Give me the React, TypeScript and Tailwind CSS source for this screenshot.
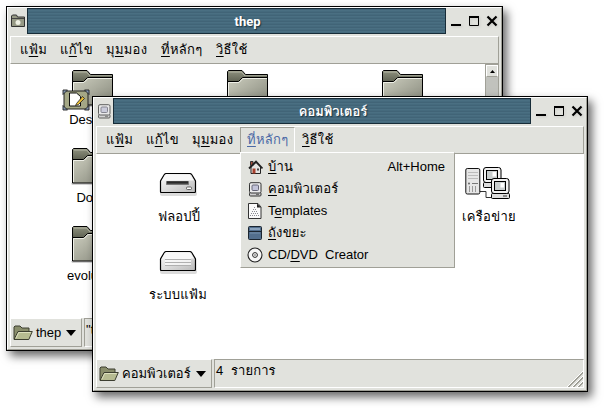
import React from 'react';

type Box = { children?: React.ReactNode; className?: string };

const sans = "font-['Liberation_Sans','Loma','Waree','Noto_Sans_Thai_Looped','Noto_Looped_Thai','Garuda','Umpush',sans-serif]";

function Key({ children }: Box) {
  return <span className="underline decoration-1 underline-offset-2">{children}</span>;
}

function Th({ children }: Box) {
  return <span className="tracking-[0.2px]">{children}</span>;
}

function Folder() {
  return (
    <svg width="44" height="42" viewBox="0 0 44 42" className="block">
      <defs>
        <linearGradient id="ff" x1="0" y1="0" x2="1" y2="1">
          <stop offset="0" stopColor="#cdcebf" />
          <stop offset="1" stopColor="#85877a" />
        </linearGradient>
        <linearGradient id="fb" x1="0" y1="0" x2="0" y2="1">
          <stop offset="0" stopColor="#8f927f" />
          <stop offset=".35" stopColor="#5c5f50" />
        </linearGradient>
      </defs>
      <path d="M0 36h42v2H1z" fill="#000" opacity=".18" />
      <path d="M1.500 35.500V2.500l1-1H16l3.500 4h22v30z" fill="url(#fb)" stroke="#000" />
      <path d="M3 3h12.500l3.500 4" fill="none" stroke="#b4b6a5" />
      <path d="M19 6.500h22" stroke="#9b9d8f" />
      <path d="M1.500 12.500h11l4-4h25v27.500h-40z" fill="url(#ff)" stroke="#000" />
      <path d="M2.500 35V13.500h10.500l4-4H41" fill="none" stroke="#eeefe6" />
    </svg>
  );
}

function OpenFolder() {
  return (
    <svg width="20" height="16" viewBox="0 0 20 16" className="block shrink-0">
      <path d="M1 14V2l1-1h5l2 2h7v3" fill="#898d6b" stroke="#3c3e30" />
      <path d="M1 14.500L5 6.500h14.300l-3.500 8z" fill="#b6bb91" stroke="#3c3e30" />
      <path d="M3 13L5.700 7.500h12" fill="none" stroke="#dde0bf" />
    </svg>
  );
}

function ComputerIcon({ dim }: { dim?: boolean }) {
  return (
    <svg width="14" height="15" viewBox="0 0 14 15" className={dim ? 'block shrink-0 opacity-75' : 'block shrink-0'}>
      <rect x="1.500" y="10.500" width="11.500" height="3.500" rx="1" fill="#cfcfd0" stroke="#333" />
      <rect x="1.500" y=".7" width="11.500" height="10.300" rx="1.500" fill="#ececee" stroke="#333" />
      <rect x="4" y="3" width="6.500" height="5.500" rx="1" fill="#c3c4da" stroke="#666677" />
      <path d="M8 12.300h3" stroke="#555" />
    </svg>
  );
}

function HomeIcon() {
  return (
    <svg width="15" height="15" viewBox="0 0 15 15" className="block">
      <path d="M3 7v6.500h9.500V7L8 2.500z" fill="#e4e4e2" stroke="#222" />
      <path d="M2.500 1.500h2.500v4H2.500z" fill="#a8503e" stroke="#333" />
      <path d="M1 8.500L8 1.500l6.500 7" fill="none" stroke="#222" strokeWidth="1.800" />
      <path d="M4.500 8.500h3v5h-3z" fill="#a8402c" />
      <path d="M9 8.500h2v2H9z" fill="#444" />
    </svg>
  );
}

function TemplateIcon() {
  return (
    <svg width="14" height="16" viewBox="0 0 14 16" className="block">
      <path d="M.5.500h9.500l3 3.500v11.500H.5z" fill="#fafafa" stroke="#333" />
      <path d="M9 .5V4.500h4z" fill="#222" />
      <path d="M6 4.500h1M5 6.500h4M4 8.500h6M3 10.500h8M2 12.500h9" stroke="#8b8b93" strokeDasharray="1 1" />
    </svg>
  );
}

function TrashIcon() {
  return (
    <svg width="14" height="14" viewBox="0 0 14 14" className="block">
      <rect x=".5" y=".5" width="13" height="13" rx="1" fill="#526e8d" stroke="#1b2530" />
      <path d="M2 2h10v2H2z" fill="#8aa2bc" />
      <path d="M1 5.500h12" stroke="#1b2530" />
      <path d="M2 7h10" stroke="#7791ad" />
    </svg>
  );
}

function DiscIcon() {
  return (
    <svg width="16" height="16" viewBox="0 0 16 16" className="block">
      <circle cx="8" cy="8" r="7" fill="#f6f6f6" stroke="#222" strokeWidth="1.100" />
      <circle cx="8" cy="8" r="2.400" fill="#fff" stroke="#222" />
      <circle cx="8" cy="8" r=".7" fill="#222" />
    </svg>
  );
}

function Drive({ floppy }: { floppy?: boolean }) {
  return (
    <svg width="38" height="25" viewBox="0 0 38 25" className="block">
      <defs>
        <linearGradient id="drive" x2="1" y2="1">
          <stop stopColor="#fff" />
          <stop offset="1" stopColor="#b9b9b9" />
        </linearGradient>
      </defs>
      <rect x="1" y="18" width="37" height="5" rx="2" fill="#000" opacity=".14" />
      <path d="M1.500 18.500V8L5 2q1-1.500 2.500-1.500h23q1.500 0 2.500 1.500l3.500 6v10.500q0 1-1 1h-33q-1 0-1-1z" fill="url(#drive)" stroke="#000" strokeWidth="1.200" />
      <path d="M3 7.500L6 2.500 7.500 1.500h23l1.500 1 3 5" fill="#f8f8f8" />
      {floppy ? (
        <>
          <path d="M7.500 8.500h22v3h-22z" fill="#444" stroke="#777" />
          <path d="M8 9h21" stroke="#111" />
          <rect x="27.500" y="14" width="5" height="2.500" rx="1" fill="#fff" stroke="#444" strokeWidth=".8" />
        </>
      ) : (
        <>
          <path d="M6 7h26v8H6z" fill="#fff" opacity=".7" />
          <path d="M6 8.500h26M6 11.500h26M6 14.500h26" stroke="#b0b0b0" />
        </>
      )}
    </svg>
  );
}

function Network() {
  const pc = (x: number, y: number) => (
    <g transform={`translate(${x} ${y})`}>
      <path d="M1.500 15.500h16q1 0 1 1v3q0 1-1 1h-16q-1 0-1-1v-3q0-1 1-1z" fill="#ddd" stroke="#000" />
      <rect x=".5" y=".5" width="17.500" height="15" rx="2.500" fill="#f1f1f1" stroke="#000" />
      <rect x="3.500" y="3.500" width="11" height="9" fill="#c9cece" stroke="#000" />
      <path d="M9.500 5h3.500v4.500H9.500z" fill="#fff" />
      <path d="M12 18h4" stroke="#333" />
    </g>
  );
  return (
    <svg width="47" height="34" viewBox="0 0 47 34" className="block">
      <path d="M15 24.500h6v6h6" fill="none" stroke="#333" />
      <rect x=".8" y="1.500" width="14" height="25.500" rx="1.500" fill="#e6e6e6" stroke="#111" />
      <path d="M3 5.500h10M3 8.500h10M3 11.500h10" stroke="#bbb" />
      <circle cx="4" cy="16.500" r="1" fill="#666" />
      <path d="M7 16.500h6" stroke="#777" />
      <path d="M4.500 19v6M7.500 19v6M10.500 19v6" stroke="#999" />
      {pc(18, 0)}
      {pc(26, 11)}
    </svg>
  );
}

function DesktopEmblem() {
  return (
    <svg width="28" height="22" viewBox="0 0 28 22" className="block">
      <rect x="2" y="2" width="24" height="18" rx="1" fill="#a5a886" stroke="#222" />
      <path d="M1 1h4.500L1 5.500zM27 1h-4.500L27 5.500zM1 21v-4.500L5.500 21zM27 21v-4.500L22.500 21z" fill="#8195b0" stroke="#222" strokeWidth=".9" />
      <path d="M7.500 4h7l4 3.500v9.500h-11z" fill="#fff" stroke="#111" />
      <path d="M14.500 14.500l6-7 2 2-6 6-3 1z" fill="#e9bd35" stroke="#222" strokeWidth=".8" />
    </svg>
  );
}

function Controls() {
  return (
    <svg width="48" height="14" viewBox="0 0 48 14" className="block drop-shadow-[1px_1px_1px_#9995]">
      <path d="M0 10h10v2H0z" />
      <path d="M18.500 3.500h9v8h-9z" fill="none" stroke="#000" />
      <path d="M18 3h10" stroke="#000" strokeWidth="2" />
      <path d="M36.500 2.500l9 9M45.500 2.500l-9 9" stroke="#000" strokeWidth="2.200" />
    </svg>
  );
}

function Menus({ open }: { open?: boolean }) {
  return (
    <nav className="flex h-7 shrink-0 border border-t-white border-l-white border-r-[#a0a097] border-b-[#a0a097] pl-[9px] text-[13px] leading-[26px] tracking-[0.3px] whitespace-nowrap">
      <span className="w-10 shrink-0">แ<Key>ฟ้</Key>ม</span>
      <span className="w-[46px] shrink-0">แ<Key>ก้</Key>ไข</span>
      <span className="w-[48px] shrink-0">มุ<Key>ม</Key>มอง</span>
      <span className={open ? 'h-[26px] w-[55px] shrink-0 border border-[#a0a097] border-b-white border-r-white pl-[6px] leading-[24px] text-[#4b69a5]' : 'w-[55px] shrink-0 pl-[7px]'}>
        <Key>ที่</Key>หลักๆ
      </span>
      <span className="pl-[7px]"><Key>วิ</Key>ธีใช้</span>
    </nav>
  );
}

function Status({ label, text, grip, width }: { label: string; text: string; grip?: boolean; width: string }) {
  return (
    <footer className="flex h-[29px] shrink-0 gap-[2px] text-[13px]">
      <div className={`${width} flex shrink-0 items-center gap-[3px] border border-t-white border-l-white border-r-[#a0a097] border-b-[#a0a097] pl-[2px] whitespace-nowrap`}>
        <OpenFolder />
        <span className="grow">{label}</span>
        <svg width="10" height="6" className="mr-[5px] block"><path d="M0 0h10L5 6z" /></svg>
      </div>
      <div className="flex grow items-end justify-between overflow-hidden border border-t-[#a0a097] border-l-[#a0a097] border-r-white border-b-white whitespace-nowrap">
        <span className="self-start pl-px leading-[22px] tracking-[0.1px] [word-spacing:4px]">{text}</span>
        {grip && (
          <svg width="16" height="16" className="block">
            <path d="M0 16L16 0M5 16L16 5M10 16l6-6" stroke="#fff" />
            <path d="M1 16L16 1M2 16L16 2M6 16L16 6M7 16l9-9M11 16l5-5M12 16l4-4" stroke="#a0a097" />
          </svg>
        )}
      </div>
    </footer>
  );
}

function Frame({ title, icon, children, className = '' }: Box & { title: string; icon: React.ReactNode }) {
  return (
    <section className={`absolute border border-black bg-[#e1e2dd] shadow-[4px_5px_9px_#0009] ${className}`}>
      <div className="flex h-full flex-col border border-t-white border-l-white border-r-[#a0a097] border-b-[#a0a097] pb-[2px]">
        <header className="mb-[2px] flex h-[26px] shrink-0 items-center">
          <div className="flex w-[19px] justify-center">{icon}</div>
          <h1 className="h-[26px] grow border border-[#172c38] bg-[repeating-linear-gradient(to_bottom,#416477_0_1px,#4a6f82_1px_2px,#456a7d_2px_3px)] pl-[22px] text-center font-['Roboto','Loma','Waree','Noto_Sans_Thai_Looped',sans-serif] text-[13px] font-bold leading-[26px] text-white [text-shadow:1px_1px_1px_#1c3440]">{title}</h1>
          <div className="w-[55px] pl-[5px]"><Controls /></div>
        </header>
        <div className="mx-[2px] flex min-h-0 grow flex-col">{children}</div>
      </div>
    </section>
  );
}

function Item({ icon, children, className = '' }: Box & { icon: React.ReactNode }) {
  return (
    <div className={`flex flex-col items-center text-[13px] leading-[18px] whitespace-nowrap ${className}`}>
      {icon}
      {children}
    </div>
  );
}

function MenuRow({ icon, children, hint }: Box & { icon: React.ReactNode; hint?: string }) {
  return (
    <li className="flex h-[22px] items-center whitespace-nowrap">
      <span className="flex w-[18px] justify-center">{icon}</span>
      <span className="grow pl-[4px]">{children}</span>
      <span className="pr-[9px]">{hint}</span>
    </li>
  );
}

export default function App() {
  return (
    <main className={`relative h-[408px] w-[604px] overflow-hidden bg-white text-black ${sans}`}>
      <Frame
        title="thep"
        className="top-[6px] left-[6px] h-[345px] w-[497px]"
        icon={
          <svg width="14" height="14" viewBox="0 0 14 14">
            <path d="M.5 12.500V2l1-1h4l1 2h7v9.500z" fill="#969985" stroke="#333" />
            <path d="M1 4.500h12" stroke="#444" />
            <circle cx="7" cy="8.500" r="2.500" fill="#eef0e4" />
          </svg>
        }
      >
        <Menus />
        <div className="flex min-h-0 grow bg-white">
          <div className="grid grow grid-cols-[155px_155px_155px] content-start pt-[5px]">
            <Item className="h-[78px] pl-[10px]" icon={<div className="relative"><Folder /><div className="absolute top-[20px] -left-[9px]"><DesktopEmblem /></div></div>}><span className="pl-px">Desktop</span></Item>
            <Item className="pl-[10px]" icon={<Folder />} />
            <Item className="pl-[10px]" icon={<Folder />} />
            <Item className="col-span-3 h-[78px] w-[155px] pl-[10px]" icon={<Folder />}><span className="pl-[4px]">Downl</span></Item>
            <Item className="col-span-3 w-[155px] pl-[10px]" icon={<Folder />}><span className="pl-px">evolution</span></Item>
          </div>
          <div className="w-[14px] border-x border-t border-[#a0a097] bg-[#c1c2bd]">
            <div className="flex h-3 items-center justify-center border border-white border-b-[#a0a097] bg-[#e1e2dd]">
              <svg width="5" height="3"><path d="M0 3L2.500 0 5 3z" /></svg>
            </div>
          </div>
        </div>
        <Status label="thep" text={'"thep"'} width="w-[72px]" />
      </Frame>
      <Frame title="คอมพิวเตอร์" className="top-[96px] left-[92px] h-[296px] w-[496px]" icon={<ComputerIcon dim />}>
        <Menus open />
        <div className="relative grid grow grid-cols-[164px_1fr_190px] content-start bg-white pt-[19px]">
          <Item className="h-[78px]" icon={<Drive floppy />}><span className="pt-[10px] pl-[2px] tracking-[0.1px]">ฟลอปปี้</span></Item>
          <span />
          <Item icon={<div className="-mt-[6px] pr-[2px]"><Network /></div>}><span className="pt-[7px] tracking-[0.3px]">เครือข่าย</span></Item>
          <Item icon={<Drive />}><span className="pt-[10px] tracking-[0.2px]">ระบบแฟ้ม</span></Item>
          <ul className="absolute -top-[2px] left-[144px] h-[116px] w-[215px] border border-t-white border-l-white border-r-[#a0a097] border-b-[#a0a097] bg-[#e1e2dd] pt-[3px] pl-[5px] text-[13px]">
            <MenuRow icon={<HomeIcon />} hint="Alt+Home"><Th><Key>บ้</Key>าน</Th></MenuRow>
            <MenuRow icon={<ComputerIcon />}><Th><Key>ค</Key>อมพิวเตอร์</Th></MenuRow>
            <MenuRow icon={<TemplateIcon />}>T<Key>e</Key>mplates</MenuRow>
            <MenuRow icon={<TrashIcon />}><Th><Key>ถั</Key>งขยะ</Th></MenuRow>
            <MenuRow icon={<DiscIcon />}>CD/<Key>D</Key>VD&nbsp; Creator</MenuRow>
          </ul>
        </div>
        <Status label="คอมพิวเตอร์" text="4 รายการ" width="w-[116px]" grip />
      </Frame>
    </main>
  );
}
